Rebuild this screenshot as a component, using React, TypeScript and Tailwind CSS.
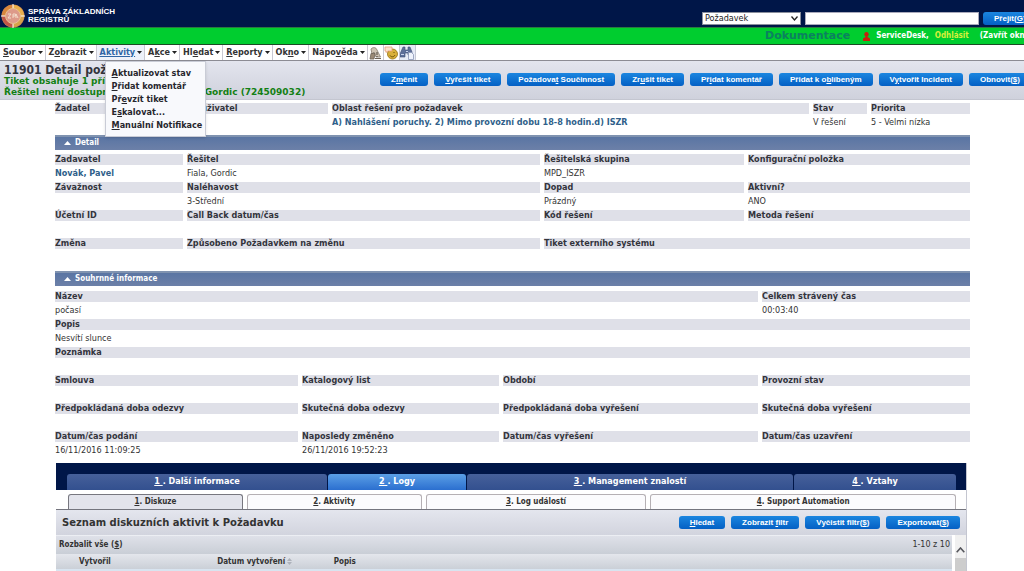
import React from 'react';

interface Field {
  label: string;
  value?: string;
  link?: boolean;
}

// "&" marks the keyboard shortcut letter, like in native menus
function Hot({ text }: { text: string }): React.ReactElement {
  const at = text.indexOf('&');
  if (at < 0) return <>{text}</>;
  return (
    <>
      {text.slice(0, at)}
      <span className="underline">{text[at + 1]}</span>
      {text.slice(at + 2)}
    </>
  );
}

function BlueButton({ text }: { text: string }): React.ReactElement {
  return (
    <button
      type="button"
      className="h-[13px] shrink-0 whitespace-nowrap rounded-[3px] bg-gradient-to-b from-[#1b86e0] to-[#0560c4] px-[11px] font-['Liberation_Sans',sans-serif] text-[8px] font-bold leading-[12px] text-white"
    >
      <Hot text={text} />
    </button>
  );
}

function FieldRow({ fields, cols }: { fields: Field[]; cols: string }): React.ReactElement {
  return (
    <dl className={`grid gap-x-1 ${cols}`}>
      {fields.map((f) => (
        <div key={f.label} className="h-7 min-w-0 whitespace-nowrap">
          <dt className="h-[11px] bg-[#dfe0e8] font-bold leading-[11px] text-[#33343c]">{f.label}</dt>
          <dd className="pt-[2px] leading-[12px] text-[#333]">
            {f.link ? (
              <a href="#" className="font-bold text-[#2f5f8a]">{f.value}</a>
            ) : (
              f.value
            )}
          </dd>
        </div>
      ))}
    </dl>
  );
}

function SectionBar({ title }: { title: string }): React.ReactElement {
  return (
    <h2>
      <button
        type="button"
        className="flex h-[15px] w-full items-center gap-1 border-t-2 border-[#8093b0] bg-gradient-to-b from-[#5a75a3] to-[#6c80a8] pb-[2px] pl-[9px] text-left text-[8px] font-bold text-white"
      >
        <svg width="7" height="4" viewBox="0 0 7 4">
          <path d="M0 4 3.5 0 7 4z" fill="#fff" />
        </svg>
        {title}
      </button>
    </h2>
  );
}

function Logo(): React.ReactElement {
  return (
    <svg width="24" height="24" viewBox="0 0 24 24" className="shrink-0">
      <circle cx="12" cy="12" r="11.5" fill="#c9854e" />
      <path d="M12 1a11 11 0 0 1 11 11H12z" fill="#e8b04c" />
      <path d="M1 12A11 11 0 0 1 12 1v11z" fill="#d9863c" />
      <path d="M12 23A11 11 0 0 1 1 12h11z" fill="#c05548" />
      <path d="M23 12a11 11 0 0 1-11 11V12z" fill="#d6a24a" />
      <circle cx="12" cy="12" r="7.5" fill="#dd9a8a" stroke="#e9c28f" />
      <path d="M12 0v4M12 20v4M0 12h4M20 12h4" stroke="#fff" />
      <path d="M7 10h3l-3 4h3M12 10v4M12 10h2.500v2H12M17 14l-2-4v4" stroke="#f3dccb" fill="none" />
    </svg>
  );
}

function ToolIcons(): React.ReactElement {
  return (
    <div className="flex items-center">
      <button type="button" aria-label="Oznámení" className="flex h-[15px] w-4 items-center justify-center border-r border-[#c9c9d2]">
        <svg width="13" height="14" viewBox="0 0 13 14">
          <path d="M2 3c2-2 5-2 6 1l3.500 7H7L5 6 3 8z" fill="#cfc4b4" stroke="#857b6f" strokeWidth=".8" />
          <path d="M2 7.500h4L5 13H1z" fill="#9a8a76" stroke="#6d6356" strokeWidth=".8" />
          <path d="M6 12.500h6" stroke="#6d6356" />
          <path d="M8 6v3M8 10v1" stroke="#4a443c" />
        </svg>
      </button>
      <button type="button" aria-label="Zprávy" className="flex h-[15px] w-4 items-center justify-center border-r border-[#c9c9d2]">
        <svg width="14" height="14" viewBox="0 0 14 14">
          <circle cx="8.500" cy="8" r="5" fill="#d9b03a" stroke="#94700c" strokeWidth=".8" />
          <path d="M1 1h7v4H4L2 6.500V5H1z" fill="#fbe3cf" stroke="#e8a07c" strokeWidth=".8" />
          <path d="M6 9.500c1 1.800 4 1.800 5-.5" stroke="#6b5208" fill="none" />
          <path d="M10 6v1" stroke="#6b5208" />
        </svg>
      </button>
      <button type="button" aria-label="Najít" className="flex h-[15px] w-4 items-center justify-center border-r border-[#c4c8d4] bg-[#e7ebf6]">
        <svg width="14" height="14" viewBox="0 0 14 14">
          <path d="M3 1h2v3h3V1h2l2 5v3H8V7H5v4H0V8z" fill="#5d6f99" stroke="#3e4d75" strokeWidth=".6" />
          <path d="M1 8.500h3M6 5.500h2" stroke="#c7d2ec" />
          <path d="M8.500 6.500h3l2 2v5h-5z" fill="#eef2fb" stroke="#8a96b5" strokeWidth=".8" />
        </svg>
      </button>
    </div>
  );
}

const menus = [
  { text: '&Soubor' },
  { text: 'Z&obrazit' },
  { text: '&Aktivity', open: true },
  { text: 'A&kce' },
  { text: 'Hl&edat' },
  { text: '&Reporty' },
  { text: 'Ok&no' },
  { text: 'Nápo&věda' },
];

const activityItems = ['&Aktualizovat stav', '&Přidat komentář', 'Př&evzít tiket', 'E&skalovat...', '&Manuální Notifikace'];

const actions = [
  'Z&měnit',
  '&Vyřešit tiket',
  'Požadova&t Součinnost',
  'Zr&ušit tiket',
  'Př&idat komentář',
  'Přidat k o&blíbeným',
  'V&ytvořit Incident',
  'Obnovit(&$)',
];

const mainTabs = ['1 . Další informace', '2 . Logy', '3 . Management znalostí', '4 . Vztahy'];
const subTabs = ['&1. Diskuze', '&2. Aktivity', '&3. Log událostí', '&4. Support Automation'];

const detailCols = 'grid-cols-[128fr_353fr_200fr_222fr]';
const summaryCols = 'grid-cols-[243fr_197fr_255fr_208fr]';

export default function App(): React.ReactElement {
  return (
    <div className="w-full overflow-hidden bg-white font-['DejaVu_Sans_Condensed','DejaVu_Sans',sans-serif] text-[9px] text-[#333]">
      <header>
        <div className="grid h-[27px] grid-cols-[702fr_322fr] bg-[#001648]">
          <div className="flex min-w-0 items-center gap-[3px] pl-[1px] pt-1">
            <Logo />
            <div className="font-['Liberation_Sans',sans-serif] text-[8px] font-bold leading-[8px] text-white">
              SPRÁVA ZÁKLADNÍCH
              <br />
              REGISTRŮ
            </div>
          </div>
          <form className="flex min-w-0 items-start gap-1 pt-3">
            <div className="relative shrink-0">
              <select
                aria-label="Typ záznamu"
                className="h-[13px] w-[99px] appearance-none border border-[#8a8f9c] bg-white pl-[2px] text-[9px] leading-[11px] text-[#222]"
              >
                <option>Požadavek</option>
              </select>
              <svg width="7" height="5" viewBox="0 0 7 5" className="pointer-events-none absolute right-[3px] top-1">
                <path d="M.5.500 3.500 4 6.500.500" stroke="#222" strokeWidth="1.300" fill="none" />
              </svg>
            </div>
            <input aria-label="Hledaný text" className="h-[13px] w-[174px] shrink-0 border border-[#aab] bg-white px-1" />
            <BlueButton text="Přejít(&G)" />
          </form>
        </div>
        <div className="grid h-[18px] grid-cols-[765fr_259fr] items-center border-b border-t border-b-[#1c4a24] border-t-[#2a7a3f] bg-[#00cd2f] text-[8px] font-bold text-white">
          <span />
          <div className="flex min-w-0 items-center whitespace-nowrap">
            <a href="#" className="font-['DejaVu_Sans',sans-serif] text-[11px] text-[#0b8160]">Dokumentace</a>
            <svg width="7" height="9" viewBox="0 0 7 9" className="ml-[13px] mr-[6px] shrink-0">
              <circle cx="3.500" cy="2.300" r="2.200" fill="#c8200c" />
              <path d="M2.500 3h2v2l2.500 1.500V9H0V6.500L2.500 5z" fill="#c8200c" />
            </svg>
            <span>ServiceDesk,</span>
            <a href="#" className="ml-[6px] text-[#d8f03a]"><Hot text="Odh&lásit" /></a>
            <a href="#" className="ml-[11px]">(Zavřít okno)</a>
          </div>
        </div>
      </header>

      <nav className="flex h-4 items-stretch border-b border-[#8c8c94] bg-white">
        {menus.map((m) => (
          <div key={m.text} className={`relative border-r border-[#c9c9d2] ${m.open ? 'bg-[#eef2fa]' : ''}`}>
            <button
              type="button"
              className={`flex h-full items-center gap-[2px] whitespace-nowrap pl-[3px] pr-[2px] font-bold ${m.open ? 'text-[#2f65a5] underline' : ''}`}
            >
              <span><Hot text={m.text} /></span>
              <svg width="5" height="3" viewBox="0 0 5 3">
                <path d="M0 0h5L2.500 3z" fill="#222" />
              </svg>
            </button>
            {m.open && (
              <ul className="absolute left-2 top-4 z-10 w-[101px] border border-[#c9ccd6] bg-[#f8f9fc] pb-1 pt-[5px] shadow-sm">
                {activityItems.map((item) => (
                  <li key={item}>
                    <button type="button" className="block h-[13px] whitespace-nowrap pl-[6px] font-bold leading-[13px] text-[#26262c]">
                      <Hot text={item} />
                    </button>
                  </li>
                ))}
              </ul>
            )}
          </div>
        ))}
        <ToolIcons />
      </nav>

      <div className="grid h-[39px] grid-cols-[380fr_644fr] border-b border-[#c4c6d0] bg-gradient-to-b from-[#e3e5ee] to-[#cfd1dc]">
        <div className="min-w-0 whitespace-nowrap pl-1 pt-[3px] text-[#138013]">
          <h1 className="text-[12px] font-bold leading-[12px] text-[#33343c]">11901 Detail požadavku</h1>
          <div className="font-['DejaVu_Sans',sans-serif] font-bold leading-[11px]">
            <p>Tiket obsahuje 1 přílohu</p>
            <p>Řešitel není dostupný. Zástupce: Fiala, Gordic (724509032)</p>
          </div>
        </div>
        <div className="flex min-w-0 gap-[6px] pt-3">
          {actions.map((a) => (
            <BlueButton key={a} text={a} />
          ))}
        </div>
      </div>

      <main className="pl-[55px] pr-[54px] pt-[3px]">
        <FieldRow
          cols="grid-cols-[102fr_167fr_477fr_54fr_99fr]"
          fields={[
            { label: 'Žadatel' },
            { label: 'Dotčený uživatel' },
            { label: 'Oblast řešení pro požadavek', value: 'A) Nahlášení poruchy. 2) Mimo provozní dobu 18-8 hodin.d) ISZR', link: true },
            { label: 'Stav', value: 'V řešení' },
            { label: 'Priorita', value: '5 - Velmi nízka' },
          ]}
        />

        <section className="mt-1">
          <SectionBar title="Detail" />
          <div className="pt-1">
            <FieldRow
              cols={detailCols}
              fields={[
                { label: 'Zadavatel', value: 'Novák, Pavel', link: true },
                { label: 'Řešitel', value: 'Fiala, Gordic' },
                { label: 'Řešitelská skupina', value: 'MPD_ISZR' },
                { label: 'Konfigurační položka' },
              ]}
            />
            <FieldRow
              cols={detailCols}
              fields={[
                { label: 'Závažnost' },
                { label: 'Naléhavost', value: '3-Střední' },
                { label: 'Dopad', value: 'Prázdný' },
                { label: 'Aktivní?', value: 'ANO' },
              ]}
            />
            <FieldRow
              cols={detailCols}
              fields={[
                { label: 'Účetní ID' },
                { label: 'Call Back datum/čas' },
                { label: 'Kód řešení' },
                { label: 'Metoda řešení' },
              ]}
            />
            <FieldRow
              cols="grid-cols-[128fr_353fr_426fr]"
              fields={[
                { label: 'Změna' },
                { label: 'Způsobeno Požadavkem na změnu' },
                { label: 'Tiket externího systému' },
              ]}
            />
          </div>
        </section>

        <section className="mt-[5px]">
          <SectionBar title="Souhrnné informace" />
          <div className="pt-[5px]">
            <FieldRow
              cols="grid-cols-[703fr_208fr]"
              fields={[
                { label: 'Název', value: 'počasí' },
                { label: 'Celkem strávený čas', value: '00:03:40' },
              ]}
            />
            <FieldRow cols="grid-cols-1" fields={[{ label: 'Popis', value: 'Nesvítí slunce' }]} />
            <FieldRow cols="grid-cols-1" fields={[{ label: 'Poznámka' }]} />
            <FieldRow
              cols={summaryCols}
              fields={[{ label: 'Smlouva' }, { label: 'Katalogový list' }, { label: 'Období' }, { label: 'Provozní stav' }]}
            />
            <FieldRow
              cols={summaryCols}
              fields={[
                { label: 'Předpokládaná doba odezvy' },
                { label: 'Skutečná doba odezvy' },
                { label: 'Předpokládaná doba vyřešení' },
                { label: 'Skutečná doba vyřešení' },
              ]}
            />
            <FieldRow
              cols={summaryCols}
              fields={[
                { label: 'Datum/čas podání', value: '16/11/2016 11:09:25' },
                { label: 'Naposledy změněno', value: '26/11/2016 19:52:23' },
                { label: 'Datum/čas vyřešení' },
                { label: 'Datum/čas uzavření' },
              ]}
            />
          </div>
        </section>

        <section className="ml-[1px] mr-[3px] mt-1 border-r border-[#c4c6d0]">
          <div className="grid h-[27px] grid-cols-[260fr_138fr_326fr_162fr] gap-x-[1px] bg-[#001648] pl-[11px] pr-[10px] pt-[11px]">
            {mainTabs.map((t, i) => (
              <button
                key={t}
                type="button"
                className={`rounded-t-[3px] bg-gradient-to-b text-[9px] font-bold text-white ${
                  i === 1 ? 'from-[#5b9fe6] to-[#2b6fcf]' : 'from-[#46609a] to-[#33508f]'
                }`}
              >
                <span className="underline">{t.slice(0, 2)}</span>
                {t.slice(2)}
              </button>
            ))}
          </div>
          <div className="grid h-5 grid-cols-[175fr_175fr_221fr_306fr] gap-x-1 border-b border-[#74757e] pl-3 pr-[10px] pt-1">
            {subTabs.map((t, i) => (
              <button
                key={t}
                type="button"
                className={`rounded-t-[3px] border border-b-0 text-[8px] font-bold ${
                  i === 0 ? 'border-[#77777f] bg-[#e3e4ec]' : 'border-[#b5b0b4] bg-[#fbfbfd]'
                }`}
              >
                <Hot text={t} />
              </button>
            ))}
          </div>
          <div className="flex h-[25px] items-center justify-between bg-gradient-to-b from-[#e4e6ee] to-[#d2d4de] px-[6px]">
            <h2 className="font-['DejaVu_Sans',sans-serif] text-[10px] font-bold">Seznam diskuzních aktivit k Požadavku</h2>
            <div className="flex gap-[6px]">
              <BlueButton text="&Hledat" />
              <BlueButton text="Zobrazit &filtr" />
              <BlueButton text="Vyčistit filtr(&$)" />
              <BlueButton text="Exportovat(&$)" />
            </div>
          </div>
          <div className="flex">
            <div className="min-w-0 flex-1 pr-[3px]">
              <div className="flex h-[19px] items-center justify-between border-t border-[#eceef3] bg-gradient-to-b from-[#dfe1e9] to-[#c9ced6] pl-[3px] pr-[2px] text-[8px]">
                <button type="button" className="font-bold"><Hot text="Rozbalit vše (&$)" /></button>
                <span className="font-['DejaVu_Sans',sans-serif]">1-10 z 10</span>
              </div>
              <table className="w-full table-fixed border-b-2 border-[#d8e4f0] text-left text-[8px]">
                <thead>
                  <tr className="h-4 bg-gradient-to-b from-[#e4e6ec] to-[#c9ced6]">
                    <th className="w-[18%] pl-[23px]">Vytvořil</th>
                    <th className="w-[13%]">
                      Datum vytvoření
                      <svg width="5" height="7" viewBox="0 0 5 7" className="ml-[2px] inline">
                        <path d="M0 3 2.500 0 5 3zM0 4 2.500 7 5 4z" fill="#aeb2bb" />
                      </svg>
                    </th>
                    <th>Popis</th>
                  </tr>
                </thead>
              </table>
            </div>
            <div className="flex w-[11px] flex-col items-center bg-[#f0f0f0] pt-3">
              <svg width="9" height="6" viewBox="0 0 9 6">
                <path d="M.7 5.300 4.500 1l3.800 4.300" stroke="#55565c" strokeWidth="1.600" fill="none" />
              </svg>
              <div className="mt-[5px] w-[11px] flex-1 bg-[#cdcdcd]" />
            </div>
          </div>
        </section>
      </main>
    </div>
  );
}
